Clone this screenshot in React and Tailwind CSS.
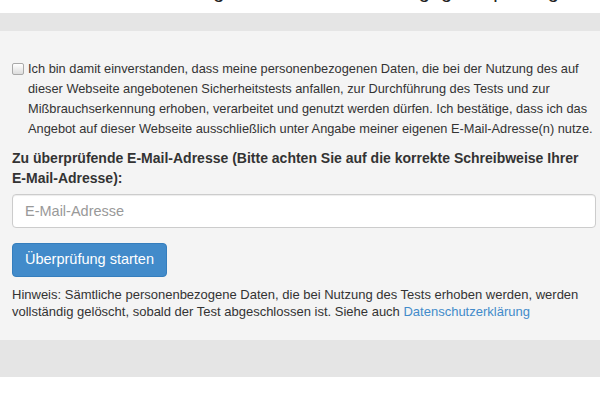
export default function App() {
  return (
    <div className="min-h-[401px] bg-white font-['Liberation_Sans',Arial,sans-serif] text-[#333]">
      {/* cut-off heading from the section above */}
      <div className="h-[13px] overflow-hidden bg-white">
        <p className="-mt-[21px] px-3 text-[20px] leading-[24px] text-[#222]">
          Sicherheitstest: Prüfung Ihrer E-Mail-Adresse gegen Spoofing
        </p>
      </div>
      <div className="h-[18px] bg-[#e5e5e5]" />

      <section className="bg-[#f4f4f4] pl-3 pr-1 pt-[28px] pb-[20px]">
        <label className="flex items-start gap-[4px]">
          <input
            type="checkbox"
            className="mt-[4px] h-[12px] w-[12px] shrink-0 appearance-none rounded-[2px] border border-[#a9a9a9] bg-gradient-to-b from-white to-[#dcdcdc]"
          />
          <span className="whitespace-nowrap text-[12.8px] leading-[20px]">
            Ich bin damit einverstanden, dass meine personenbezogenen Daten, die bei der Nutzung des auf
            <br />
            dieser Webseite angebotenen Sicherheitstests anfallen, zur Durchführung des Tests und zur
            <br />
            Mißbrauchserkennung erhoben, verarbeitet und genutzt werden dürfen. Ich bestätige, dass ich das
            <br />
            Angebot auf dieser Webseite ausschließlich unter Angabe meiner eigenen E-Mail-Adresse(n) nutze.
          </span>
        </label>

        <p className="mt-[9px] text-[14px] font-bold leading-[20px] text-[#333]">
          Zu überprüfende E-Mail-Adresse (Bitte achten Sie auf die korrekte Schreibweise Ihrer{" "}
          <span className="whitespace-nowrap">E-Mail-Adresse):</span>
        </p>

        <input
          type="text"
          placeholder="E-Mail-Adresse"
          className="mt-[6px] block h-[34px] w-full rounded-[4px] border border-[#ccc] bg-white px-3 text-[14.5px] shadow-[inset_0_1px_1px_rgba(0,0,0,0.075)] outline-none placeholder:text-[#999]"
        />

        <button
          type="button"
          className="mt-[15px] h-[34px] rounded-[4px] border border-[#357ebd] bg-[#428bca] px-3 text-[14.5px] text-white"
        >
          Überprüfung starten
        </button>

        <p className="mt-[9px] text-[13px] leading-[17px]">
          Hinweis: Sämtliche personenbezogene Daten, die bei Nutzung des Tests erhoben werden, werden
          vollständig gelöscht, sobald der Test abgeschlossen ist. Siehe auch{" "}
          <a href="#" className="text-[#428bca]">
            Datenschutzerklärung
          </a>
        </p>
      </section>

      <div className="h-[37px] bg-[#e5e5e5]" />
    </div>
  );
}
